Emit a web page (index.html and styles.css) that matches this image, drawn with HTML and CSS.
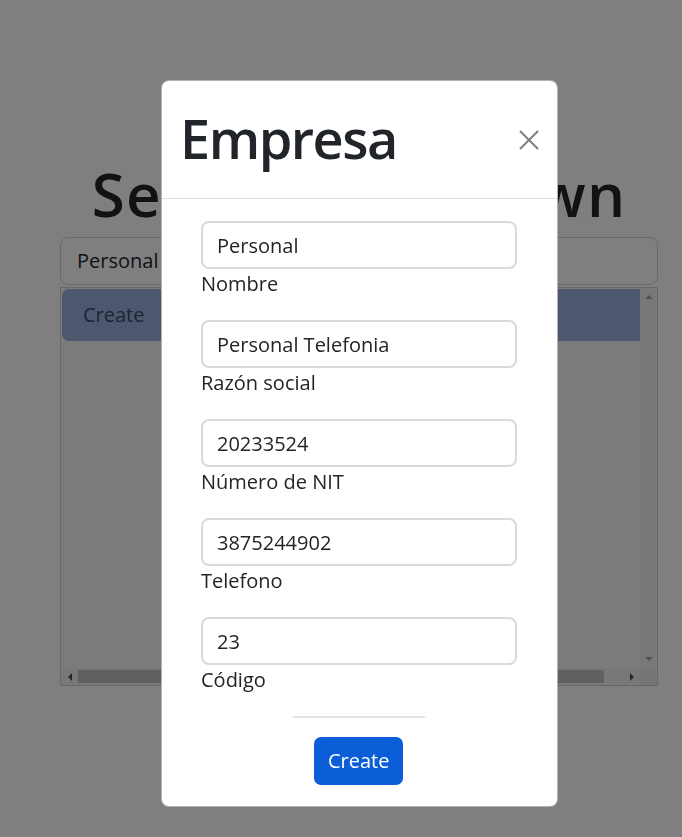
FILE: index.html
```html
<!DOCTYPE html>
<html lang="es">
<head>
<meta charset="utf-8">
<title>Empresa</title>
<link rel="stylesheet" href="styles.css">
</head>
<body>
<main class="page">
  <h1 class="page-title">Search Dropdown</h1>
  <div class="search-input">Personal</div>
  <div class="listbox">
    <div class="listbox-view">
      <div class="option active">Create</div>
    </div>
    <div class="vscroll"><span class="arrow arrow-up"></span><span class="arrow arrow-down"></span></div>
    <div class="hscroll"><span class="arrow-box"><span class="arrow arrow-left"></span></span><span class="thumb"></span><span class="arrow-box"><span class="arrow arrow-right"></span></span></div>
    <div class="corner"></div>
  </div>
</main>

<div class="backdrop"></div>

<div class="modal" role="dialog">
  <div class="modal-header">
    <h2 class="modal-title">Empresa</h2>
    <button class="btn-close" type="button" aria-label="Close">
      <svg width="20" height="20" viewBox="0 0 20 20"><path d="M1 1L19 19M19 1L1 19" stroke="currentColor" stroke-width="2" fill="none"/></svg>
    </button>
  </div>
  <form class="modal-body">
    <div class="field"><input class="form-control" type="text" value="Personal"><label class="field-label">Nombre</label></div>
    <div class="field"><input class="form-control" type="text" value="Personal Telefonia"><label class="field-label">Razón social</label></div>
    <div class="field"><input class="form-control" type="text" value="20233524"><label class="field-label">Número de NIT</label></div>
    <div class="field"><input class="form-control" type="text" value="3875244902"><label class="field-label">Telefono</label></div>
    <div class="field"><input class="form-control" type="text" value="23"><label class="field-label">Código</label></div>
    <hr class="divider">
    <button class="btn-primary" type="button">Create</button>
  </form>
</div>
</body>
</html>
```
FILE: styles.css
```css
* { box-sizing: border-box; }

html, body {
  margin: 0;
  padding: 0;
  background: #fff;
  font-family: "Open Sans", "Noto Sans", sans-serif;
  color: #212529;
  width: 682px;
  height: 837px;
  overflow: hidden;
}

.page {
  width: 598px;
  margin-left: 60px;
  padding-top: 158px;
}

.page-title {
  margin: 0 0 7px;
  font-size: 60px;
  font-weight: 600;
  line-height: 72px;
  text-align: center;
  letter-spacing: 1.2px;
  white-space: nowrap;
}

.search-input {
  height: 48px;
  border: 1px solid #ced4da;
  border-radius: 8px;
  padding: 0 16px;
  font-size: 20px;
  line-height: 46px;
}

.listbox {
  margin-top: 2px;
  height: 399px;
  border: 1px solid #cfcfcf;
  background: #f6f6f6;
  display: grid;
  grid-template-columns: 1fr 17px;
  grid-template-rows: 1fr 17px;
}

.listbox-view {
  overflow: hidden;
  padding: 1px 0 0 1px;
}

.option {
  width: 640px;
  height: 52px;
  padding: 0 21px;
  font-size: 20px;
  line-height: 52px;
  border-radius: 7px;
}

.option.active {
  background: #9ab0de;
  color: #3c4866;
}

.vscroll {
  background: #f1f1f1;
  display: flex;
  flex-direction: column;
  justify-content: space-between;
  align-items: center;
  padding: 7px 0;
}

.hscroll {
  background: #f1f1f1;
  display: flex;
  align-items: center;
}

.arrow-box {
  width: 17px;
  height: 17px;
  display: flex;
  align-items: center;
  justify-content: center;
}

.hscroll .arrow-box:last-child { margin-left: auto; }

.thumb {
  width: 526px;
  height: 13px;
  background: #c1c1c1;
}

.corner { background: #ececec; }

.arrow {
  width: 0;
  height: 0;
  border: 4px solid transparent;
}

.arrow-up { border-bottom-color: #a3a3a3; border-top-width: 0; }
.arrow-down { border-top-color: #a3a3a3; border-bottom-width: 0; }
.arrow-left { border-right-color: #505050; border-left-width: 0; }
.arrow-right { border-left-color: #505050; border-right-width: 0; }

.backdrop {
  position: fixed;
  inset: 0;
  background: rgba(0, 0, 0, 0.5);
}

.modal {
  position: absolute;
  left: 161px;
  top: 80px;
  width: 397px;
  background: #fff;
  border: 1px solid rgba(0, 0, 0, 0.3);
  border-radius: 8px;
}

.modal-header {
  display: flex;
  align-items: center;
  justify-content: space-between;
  height: 118px;
  padding: 0 18px 4px 18px;
  border-bottom: 1px solid #d9dde1;
}

.modal-title {
  margin: 0;
  font-size: 54px;
  font-weight: 600;
  line-height: 66px;
  letter-spacing: -1.5px;
}

.btn-close {
  border: 0;
  background: transparent;
  padding: 0;
  width: 20px;
  height: 20px;
  color: #808080;
  display: flex;
  margin-top: 4px;
}

.modal-body {
  display: flex;
  flex-direction: column;
  align-items: flex-start;
  padding: 22px 0 21px 39px;
  margin: 0;
}

.field {
  width: 316px;
  display: flex;
  flex-direction: column;
  margin-bottom: 21px;
}

.field:last-of-type { margin-bottom: 0; }

.form-control {
  height: 48px;
  border: 2px solid #d8dbde;
  border-radius: 8px;
  padding: 0 14px;
  font-family: "Open Sans", "Noto Sans", sans-serif;
  font-size: 20px;
  color: #212529;
  background: #fff;
  outline: none;
}

.field-label {
  font-size: 20px;
  line-height: 30px;
}

.divider {
  width: 132px;
  margin: 21px 0 19px 92px;
  border: 0;
  border-top: 2px solid #e3e3e3;
}

.btn-primary {
  align-self: flex-start;
  margin-left: 113px;
  height: 48px;
  padding: 0 14px;
  border: 0;
  border-radius: 7px;
  background: #0b5ed7;
  color: #fff;
  font-family: "Open Sans", "Noto Sans", sans-serif;
  font-size: 20px;
  line-height: 48px;
}
```
